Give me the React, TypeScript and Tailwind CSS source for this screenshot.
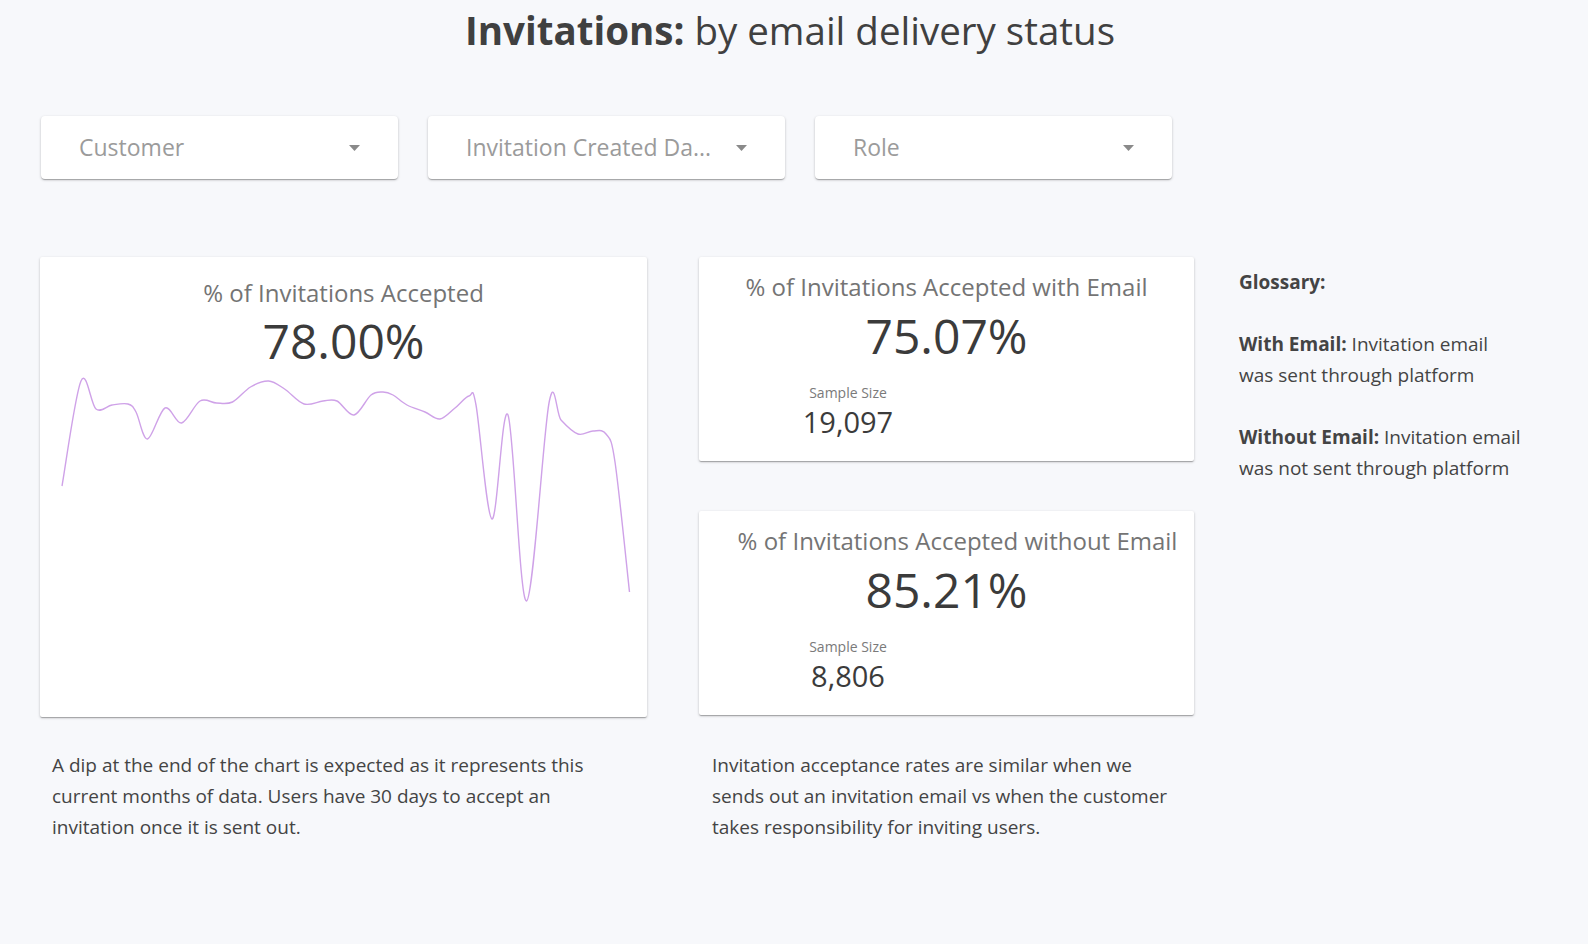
import { useMemo } from "react"

type Pt = [number, number]

// trend points in card-local pixels (card is 607 x 460)
const trend: Pt[] = [
  [22, 229], [41, 124], [56, 152], [72, 148], [88, 147], [96, 155], [107.5, 182],
  [125, 151], [141.6, 166], [160, 144], [176.5, 146], [192.5, 145], [210.5, 130],
  [228.6, 124], [244.6, 132], [264, 147], [283, 144], [297, 144], [314, 158],
  [331, 138], [343, 135], [353, 138], [367, 148], [385, 155], [400, 162],
  [415, 151], [429, 139], [436, 148], [452, 262], [468, 158], [486.5, 344],
  [509, 146], [521, 163], [538, 177], [553, 174], [566, 177], [575, 205],
  [589.5, 335],
]

function smoothPath(p: Pt[]) {
  let d = `M${p[0][0]},${p[0][1]}`
  for (let i = 0; i < p.length - 1; i++) {
    const p0 = p[i - 1] ?? p[i]
    const p1 = p[i]
    const p2 = p[i + 1]
    const p3 = p[i + 2] ?? p2
    const c1x = p1[0] + (p2[0] - p0[0]) / 6
    const c1y = p1[1] + (p2[1] - p0[1]) / 6
    const c2x = p2[0] - (p3[0] - p1[0]) / 6
    const c2y = p2[1] - (p3[1] - p1[1]) / 6
    d += ` C${c1x.toFixed(1)},${c1y.toFixed(1)} ${c2x.toFixed(1)},${c2y.toFixed(1)} ${p2[0]},${p2[1]}`
  }
  return d
}

const cardShadow =
  "shadow-[0_1px_3px_rgba(0,0,0,0.2),0_1px_1px_rgba(0,0,0,0.14),0_2px_1px_-1px_rgba(0,0,0,0.12)]"

function Filter({ label }: { label: string }) {
  return (
    <div
      className={`w-[357px] h-[63px] bg-white rounded-[4px] ${cardShadow} flex items-center pl-[38px] pr-[38px]`}
    >
      <span className="flex-1 text-[23px] text-[#9b9b9b] truncate">{label}</span>
      <svg width="11" height="6" viewBox="0 0 11 6" className="ml-4 shrink-0">
        <path d="M0 0 L11 0 L5.5 6 Z" fill="#8a8a8a" />
      </svg>
    </div>
  )
}

function StatCard({
  title,
  value,
  sample,
  titleShift,
}: {
  title: string
  value: string
  sample: string
  titleShift?: boolean
}) {
  return (
    <div className={`w-[495px] h-[204px] bg-white rounded-[2px] ${cardShadow} flex flex-col`}>
      <div
        className={`mt-[15px] text-center whitespace-nowrap text-[24px] leading-[30px] text-[#747474] ${
          titleShift ? "pl-[22px]" : ""
        }`}
      >
        {title}
      </div>
      <div className="mt-[6px] text-center text-[48px] leading-[56px] text-[#3b3b3b]">{value}</div>
      <div className="ml-[69px] w-[160px] text-center mt-[19px]">
        <div className="text-[14px] leading-[20px] text-[#7a7a7a]">Sample Size</div>
        <div className="mt-[1px] text-[29px] leading-[36px] text-[#3b3b3b]">{sample}</div>
      </div>
    </div>
  )
}

export default function App() {
  const d = useMemo(() => smoothPath(trend), [])

  return (
    <div className="min-h-screen bg-[#f7f8fb] font-['Open_Sans',sans-serif] text-[#424242]">
      {/* Header */}
      <div className="h-[62px] pr-[8px] flex items-center justify-center text-[38.5px] text-[#404040]">
        <span className="font-bold">Invitations:</span>
        <span className="ml-[10px]">by email delivery status</span>
      </div>

      {/* Filters */}
      <div className="mt-[54px] pl-[41px] flex gap-[30px]">
        <Filter label="Customer" />
        <Filter label="Invitation Created Da..." />
        <Filter label="Role" />
      </div>

      {/* Content */}
      <div className="mt-[78px] pl-[40px] flex items-start">
        <div className="w-[607px] flex flex-col">
          <div className={`h-[460px] bg-white rounded-[2px] ${cardShadow} flex flex-col`}>
            <div className="mt-[21px] text-center text-[24px] leading-[30px] text-[#747474]">
              % of Invitations Accepted
            </div>
            <div className="mt-[5px] text-center text-[48px] leading-[56px] text-[#3b3b3b]">78.00%</div>
            <svg width="607" height="348" viewBox="0 112 607 348" className="block">
              <path d={d} fill="none" stroke="#cfa2e8" strokeWidth="1.4" />
            </svg>
          </div>
          <p className="mt-[33px] pl-[12px] pr-[20px] text-[19px] leading-[31px] text-[#444]">
            A dip at the end of the chart is expected as it represents this current months of data. Users have 30
            days to accept an invitation once it is sent out.
          </p>
        </div>

        <div className="ml-[52px] w-[495px] flex flex-col">
          <StatCard title="% of Invitations Accepted with Email" value="75.07%" sample="19,097" />
          <div className="mt-[50px]">
            <StatCard title="% of Invitations Accepted without Email" value="85.21%" sample="8,806" titleShift />
          </div>
          <p className="mt-[35px] pl-[13px] pr-[10px] text-[19px] leading-[31px] text-[#444]">
            Invitation acceptance rates are similar when we sends out an invitation email vs when the customer
            takes responsibility for inviting users.
          </p>
        </div>

        <div className="ml-[45px] w-[287px] pt-[10px] text-[19px] leading-[31px] text-[#444]">
          <p className="font-bold">Glossary:</p>
          <p className="mt-[31px]">
            <span className="font-bold">With Email:</span> Invitation email was sent through platform
          </p>
          <p className="mt-[31px]">
            <span className="font-bold">Without Email:</span> Invitation email was not sent through platform
          </p>
        </div>
      </div>
    </div>
  )
}
